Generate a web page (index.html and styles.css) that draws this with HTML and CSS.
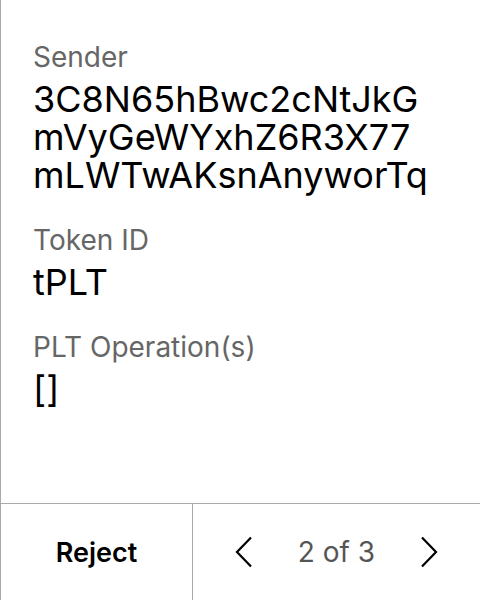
FILE: index.html
```html
<!DOCTYPE html>
<html>
<head>
<meta charset="utf-8">
<link rel="stylesheet" href="styles.css">
</head>
<body>
<div class="screen">
  <div class="content">
    <div class="field">
      <div class="label">Sender</div>
      <div class="value">3C8N65hBwc2cNtJkG<br>mVyGeWYxhZ6R3X77<br>mLWTwAKsnAnyworTq</div>
    </div>
    <div class="field">
      <div class="label">Token ID</div>
      <div class="value">tPLT</div>
    </div>
    <div class="field">
      <div class="label">PLT Operation(s)</div>
      <div class="value">[]</div>
    </div>
  </div>
  <div class="footer">
    <div class="reject">Reject</div>
    <div class="pager">
      <svg class="chev" width="18" height="32" viewBox="0 0 18 32"><path d="M16 1.5 L2 16 L16 30.5" fill="none" stroke="#000" stroke-width="2.2"/></svg>
      <span class="count">2 of 3</span>
      <svg class="chev" width="18" height="32" viewBox="0 0 18 32"><path d="M2 1.5 L16 16 L2 30.5" fill="none" stroke="#000" stroke-width="2.2"/></svg>
    </div>
  </div>
</div>
</body>
</html>
```
FILE: styles.css
```css
html, body {
  margin: 0;
  padding: 0;
  background: #fff;
}
body {
  font-family: Inter, "Noto Sans", sans-serif;
}
.screen {
  width: 480px;
  height: 600px;
  box-sizing: border-box;
  border-left: 1px solid #aaa;
  display: flex;
  flex-direction: column;
}
.content {
  flex: 1;
  padding: 40px 0 0 32px;
  display: flex;
  flex-direction: column;
  gap: 29px;
}
.label {
  font-size: 28px;
  line-height: 34px;
  color: #666;
}
.value {
  font-size: 36px;
  line-height: 38px;
  color: #000;
  margin-top: 6px;
}
.footer {
  height: 96px;
  border-top: 1px solid #aaa;
  display: flex;
}
.reject {
  width: 191px;
  border-right: 1px solid #aaa;
  display: flex;
  align-items: center;
  justify-content: center;
  font-size: 27px;
  font-weight: 600;
  color: #000;
}
.pager {
  flex: 1;
  display: flex;
  align-items: center;
  justify-content: space-between;
  padding: 0 42px;
}
.count {
  font-size: 28px;
  color: #555;
}
```
